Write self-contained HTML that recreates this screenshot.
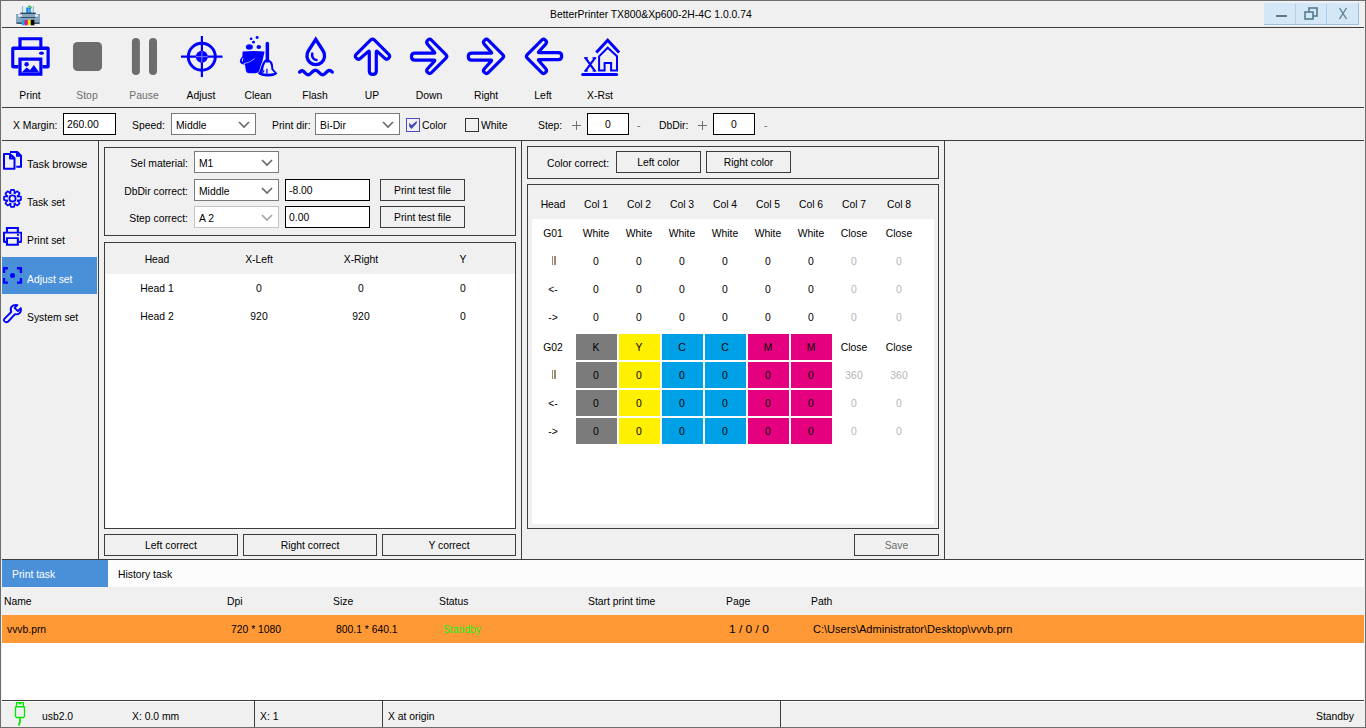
<!DOCTYPE html>
<html><head><meta charset="utf-8">
<style>
*{box-sizing:border-box;margin:0;padding:0}
html,body{width:1366px;height:728px;overflow:hidden;background:#f0f0f0}
body{position:relative;font-family:"Liberation Sans",sans-serif;font-size:11px;color:#000}
.a{position:absolute}
.a svg{display:block}
.t{position:absolute;white-space:nowrap;line-height:14px;font-size:11.5px;transform:scaleX(0.9)}
</style></head><body>
<div class="a" style="left:0px;top:0px;width:1366px;height:1px;background:#6d6d6d"></div>
<div class="a" style="left:0px;top:0px;width:1px;height:728px;background:#6d6d6d"></div>
<div class="a" style="left:1365px;top:0px;width:1px;height:728px;background:#6d6d6d"></div>
<div class="a" style="left:0px;top:727px;width:1366px;height:1px;background:#6d6d6d"></div>
<div class="t" style="left:550px;top:7px;transform-origin:0 0;">BetterPrinter TX800&amp;Xp600-2H-4C 1.0.0.74</div>
<div class="a" style="left:2px;top:27px;width:1362px;height:1px;background:#3c3c3c"></div>
<div class="a" style="left:1264px;top:3px;width:95px;height:22px;background:#d3e7f6"></div>
<div class="a" style="left:1264px;top:24px;width:95px;height:1px;background:#9cc2df"></div>
<div class="a" style="left:1295px;top:4px;width:1px;height:20px;background:#b0d0ea"></div>
<div class="a" style="left:1326px;top:4px;width:1px;height:20px;background:#b0d0ea"></div>
<div class="a" style="left:1358px;top:3px;width:1px;height:21px;background:#9cc2df"></div>
<div class="a" style="left:1276px;top:15px;width:11px;height:2px;background:#577a8f"></div>
<div class="a" style="left:1304px;top:7px"><svg width="15" height="13"><rect x="5" y="1" width="8" height="8" fill="none" stroke="#577a8f" stroke-width="1.6"/><rect x="1" y="5" width="8" height="7" fill="#d3e7f6" stroke="#577a8f" stroke-width="1.6"/></svg></div>
<div class="a" style="left:1338px;top:7px"><svg width="10" height="13"><path d="M1.5 1 L8.5 12 M8.5 1 L1.5 12" stroke="#577a8f" stroke-width="1.3"/></svg></div>
<div class="a" style="left:2px;top:107px;width:1362px;height:1px;background:#3c3c3c"></div>
<div class="t" style="left:0.0px;top:88px;width:60px;text-align:center;transform-origin:50% 0;">Print</div>
<div class="t" style="left:57.0px;top:88px;width:60px;text-align:center;transform-origin:50% 0;color:#6d6d6d">Stop</div>
<div class="t" style="left:114.0px;top:88px;width:60px;text-align:center;transform-origin:50% 0;color:#6d6d6d">Pause</div>
<div class="t" style="left:171.0px;top:88px;width:60px;text-align:center;transform-origin:50% 0;">Adjust</div>
<div class="t" style="left:228.0px;top:88px;width:60px;text-align:center;transform-origin:50% 0;">Clean</div>
<div class="t" style="left:285.0px;top:88px;width:60px;text-align:center;transform-origin:50% 0;">Flash</div>
<div class="t" style="left:342.0px;top:88px;width:60px;text-align:center;transform-origin:50% 0;">UP</div>
<div class="t" style="left:399.0px;top:88px;width:60px;text-align:center;transform-origin:50% 0;">Down</div>
<div class="t" style="left:456.0px;top:88px;width:60px;text-align:center;transform-origin:50% 0;">Right</div>
<div class="t" style="left:513.0px;top:88px;width:60px;text-align:center;transform-origin:50% 0;">Left</div>
<div class="t" style="left:570.0px;top:88px;width:60px;text-align:center;transform-origin:50% 0;">X-Rst</div>
<div class="t" style="left:13px;top:118px;transform-origin:0 0;">X Margin:</div>
<div class="a" style="left:63px;top:113px;width:53px;height:22px;border:1px solid #000;background:#fff"></div>
<div class="t" style="left:67px;top:117px;transform-origin:0 0;">260.00</div>
<div class="t" style="left:132px;top:118px;transform-origin:0 0;">Speed:</div>
<div class="a" style="left:171px;top:113px;width:85px;height:22px;border:1px solid #7a7a7a;background:#fff"></div>
<div class="t" style="left:176px;top:118px;transform-origin:0 0;">Middle</div>
<div class="a" style="left:238px;top:121px"><svg width="12" height="8" viewBox="0 0 12 8"><path d="M1 1 L6 6 L11 1" fill="none" stroke="#6a6a6a" stroke-width="1.7"/></svg></div>
<div class="t" style="left:272px;top:118px;transform-origin:0 0;">Print dir:</div>
<div class="a" style="left:315px;top:113px;width:85px;height:22px;border:1px solid #7a7a7a;background:#fff"></div>
<div class="t" style="left:320px;top:118px;transform-origin:0 0;">Bi-Dir</div>
<div class="a" style="left:382px;top:121px"><svg width="12" height="8" viewBox="0 0 12 8"><path d="M1 1 L6 6 L11 1" fill="none" stroke="#6a6a6a" stroke-width="1.7"/></svg></div>
<div class="a" style="left:406px;top:118px;width:14px;height:14px;border:1px solid #4d4dc2;background:#f0f0f0"></div>
<div class="a" style="left:0;top:0"><svg width="430" height="140"><path d="M409 122.8 L411.6 125.2 L416.9 120.8 L416.6 123.6 L411.4 129 L409.2 126.6 Z" fill="#4343b8"/></svg></div>
<div class="t" style="left:422px;top:118px;transform-origin:0 0;">Color</div>
<div class="a" style="left:465px;top:118px;width:14px;height:14px;border:1px solid #333;background:#f0f0f0"></div>
<div class="t" style="left:481px;top:118px;transform-origin:0 0;">White</div>
<div class="t" style="left:538px;top:118px;transform-origin:0 0;">Step:</div>
<div class="a" style="left:572px;top:125px;width:9px;height:1px;background:#707070"></div>
<div class="a" style="left:576px;top:121px;width:1px;height:9px;background:#707070"></div>
<div class="a" style="left:587px;top:113px;width:42px;height:22px;border:1px solid #000;background:#fff"></div>
<div class="t" style="left:587.0px;top:117px;width:42px;text-align:center;transform-origin:50% 0;">0</div>
<div class="t" style="left:637px;top:118px;transform-origin:0 0;color:#666">-</div>
<div class="t" style="left:659px;top:118px;transform-origin:0 0;">DbDir:</div>
<div class="a" style="left:698px;top:125px;width:9px;height:1px;background:#707070"></div>
<div class="a" style="left:702px;top:121px;width:1px;height:9px;background:#707070"></div>
<div class="a" style="left:713px;top:113px;width:42px;height:22px;border:1px solid #000;background:#fff"></div>
<div class="t" style="left:713.0px;top:117px;width:42px;text-align:center;transform-origin:50% 0;">0</div>
<div class="t" style="left:764px;top:118px;transform-origin:0 0;color:#666">-</div>
<div class="a" style="left:2px;top:140px;width:1362px;height:1px;background:#3c3c3c"></div>
<div class="a" style="left:98px;top:141px;width:1px;height:418px;background:#3c3c3c"></div>
<div class="a" style="left:2px;top:257px;width:95px;height:37px;background:#4a90d9"></div>
<div class="t" style="left:27px;top:157px;transform-origin:0 0;transform:scaleX(0.945)">Task browse</div>
<div class="t" style="left:27px;top:195px;transform-origin:0 0;">Task set</div>
<div class="t" style="left:27px;top:233px;transform-origin:0 0;">Print set</div>
<div class="t" style="left:27px;top:272px;transform-origin:0 0;color:#fff">Adjust set</div>
<div class="t" style="left:27px;top:310px;transform-origin:0 0;">System set</div>
<div class="a" style="left:104px;top:147px;width:412px;height:89px;border:1px solid #3c3c3c;"></div>
<div class="t" style="left:-12px;top:156px;width:200px;text-align:right;transform-origin:100% 0;">Sel material:</div>
<div class="a" style="left:194px;top:151px;width:85px;height:22px;border:1px solid #7a7a7a;background:#fff"></div>
<div class="t" style="left:199px;top:156px;transform-origin:0 0;">M1</div>
<div class="a" style="left:261px;top:159px"><svg width="12" height="8" viewBox="0 0 12 8"><path d="M1 1 L6 6 L11 1" fill="none" stroke="#6a6a6a" stroke-width="1.7"/></svg></div>
<div class="t" style="left:-12px;top:184px;width:200px;text-align:right;transform-origin:100% 0;">DbDir correct:</div>
<div class="a" style="left:194px;top:179px;width:85px;height:22px;border:1px solid #7a7a7a;background:#fff"></div>
<div class="t" style="left:199px;top:184px;transform-origin:0 0;">Middle</div>
<div class="a" style="left:261px;top:187px"><svg width="12" height="8" viewBox="0 0 12 8"><path d="M1 1 L6 6 L11 1" fill="none" stroke="#6a6a6a" stroke-width="1.7"/></svg></div>
<div class="a" style="left:285px;top:179px;width:85px;height:22px;border:1px solid #000;background:#fff"></div>
<div class="t" style="left:289px;top:183px;transform-origin:0 0;">-8.00</div>
<div class="a" style="left:380px;top:179px;width:85px;height:22px;border:1px solid #3c3c3c;background:#f0f0f0;"></div>
<div class="t" style="left:380.0px;top:183px;width:85px;text-align:center;transform-origin:50% 0;">Print test file</div>
<div class="t" style="left:-12px;top:211px;width:200px;text-align:right;transform-origin:100% 0;">Step correct:</div>
<div class="a" style="left:194px;top:206px;width:85px;height:22px;border:1px solid #c4c4c4;background:#fff"></div>
<div class="t" style="left:199px;top:211px;transform-origin:0 0;">A 2</div>
<div class="a" style="left:261px;top:214px"><svg width="12" height="8" viewBox="0 0 12 8"><path d="M1 1 L6 6 L11 1" fill="none" stroke="#a6a6a6" stroke-width="1.7"/></svg></div>
<div class="a" style="left:285px;top:206px;width:85px;height:22px;border:1px solid #000;background:#fff"></div>
<div class="t" style="left:289px;top:210px;transform-origin:0 0;">0.00</div>
<div class="a" style="left:380px;top:206px;width:85px;height:22px;border:1px solid #3c3c3c;background:#f0f0f0;"></div>
<div class="t" style="left:380.0px;top:210px;width:85px;text-align:center;transform-origin:50% 0;">Print test file</div>
<div class="a" style="left:104px;top:242px;width:412px;height:287px;border:1px solid #3c3c3c;"></div>
<div class="a" style="left:106px;top:274px;width:409px;height:254px;background:#fff"></div>
<div class="t" style="left:56.5px;top:252px;width:200px;text-align:center;transform-origin:50% 0;">Head</div>
<div class="t" style="left:158.5px;top:252px;width:200px;text-align:center;transform-origin:50% 0;">X-Left</div>
<div class="t" style="left:260.5px;top:252px;width:200px;text-align:center;transform-origin:50% 0;">X-Right</div>
<div class="t" style="left:362.5px;top:252px;width:200px;text-align:center;transform-origin:50% 0;">Y</div>
<div class="t" style="left:56.5px;top:281px;width:200px;text-align:center;transform-origin:50% 0;">Head 1</div>
<div class="t" style="left:158.5px;top:281px;width:200px;text-align:center;transform-origin:50% 0;">0</div>
<div class="t" style="left:260.5px;top:281px;width:200px;text-align:center;transform-origin:50% 0;">0</div>
<div class="t" style="left:362.5px;top:281px;width:200px;text-align:center;transform-origin:50% 0;">0</div>
<div class="t" style="left:56.5px;top:309px;width:200px;text-align:center;transform-origin:50% 0;">Head 2</div>
<div class="t" style="left:158.5px;top:309px;width:200px;text-align:center;transform-origin:50% 0;">920</div>
<div class="t" style="left:260.5px;top:309px;width:200px;text-align:center;transform-origin:50% 0;">920</div>
<div class="t" style="left:362.5px;top:309px;width:200px;text-align:center;transform-origin:50% 0;">0</div>
<div class="a" style="left:104px;top:534px;width:134px;height:22px;border:1px solid #3c3c3c;background:#f0f0f0;"></div>
<div class="t" style="left:104.0px;top:538px;width:134px;text-align:center;transform-origin:50% 0;">Left correct</div>
<div class="a" style="left:243px;top:534px;width:134px;height:22px;border:1px solid #3c3c3c;background:#f0f0f0;"></div>
<div class="t" style="left:243.0px;top:538px;width:134px;text-align:center;transform-origin:50% 0;">Right correct</div>
<div class="a" style="left:382px;top:534px;width:134px;height:22px;border:1px solid #3c3c3c;background:#f0f0f0;"></div>
<div class="t" style="left:382.0px;top:538px;width:134px;text-align:center;transform-origin:50% 0;">Y correct</div>
<div class="a" style="left:521px;top:141px;width:1px;height:418px;background:#3c3c3c"></div>
<div class="a" style="left:527px;top:146px;width:412px;height:33px;border:1px solid #3c3c3c;"></div>
<div class="t" style="left:547px;top:156px;transform-origin:0 0;">Color correct:</div>
<div class="a" style="left:616px;top:151px;width:85px;height:22px;border:1px solid #3c3c3c;background:#f0f0f0;"></div>
<div class="t" style="left:616.0px;top:155px;width:85px;text-align:center;transform-origin:50% 0;">Left color</div>
<div class="a" style="left:706px;top:151px;width:85px;height:22px;border:1px solid #3c3c3c;background:#f0f0f0;"></div>
<div class="t" style="left:706.0px;top:155px;width:85px;text-align:center;transform-origin:50% 0;">Right color</div>
<div class="a" style="left:527px;top:184px;width:412px;height:345px;border:1px solid #3c3c3c;"></div>
<div class="a" style="left:532px;top:219px;width:402px;height:305px;background:#fff"></div>
<div class="t" style="left:452.5px;top:197px;width:200px;text-align:center;transform-origin:50% 0;">Head</div>
<div class="t" style="left:496.0px;top:197px;width:200px;text-align:center;transform-origin:50% 0;">Col 1</div>
<div class="t" style="left:539.0px;top:197px;width:200px;text-align:center;transform-origin:50% 0;">Col 2</div>
<div class="t" style="left:582.0px;top:197px;width:200px;text-align:center;transform-origin:50% 0;">Col 3</div>
<div class="t" style="left:625.0px;top:197px;width:200px;text-align:center;transform-origin:50% 0;">Col 4</div>
<div class="t" style="left:668.0px;top:197px;width:200px;text-align:center;transform-origin:50% 0;">Col 5</div>
<div class="t" style="left:711.0px;top:197px;width:200px;text-align:center;transform-origin:50% 0;">Col 6</div>
<div class="t" style="left:753.8px;top:197px;width:200px;text-align:center;transform-origin:50% 0;">Col 7</div>
<div class="t" style="left:798.5px;top:197px;width:200px;text-align:center;transform-origin:50% 0;">Col 8</div>
<div class="t" style="left:452.5px;top:226px;width:200px;text-align:center;transform-origin:50% 0;">G01</div>
<div class="t" style="left:496.0px;top:226px;width:200px;text-align:center;transform-origin:50% 0;">White</div>
<div class="t" style="left:539.0px;top:226px;width:200px;text-align:center;transform-origin:50% 0;">White</div>
<div class="t" style="left:582.0px;top:226px;width:200px;text-align:center;transform-origin:50% 0;">White</div>
<div class="t" style="left:625.0px;top:226px;width:200px;text-align:center;transform-origin:50% 0;">White</div>
<div class="t" style="left:668.0px;top:226px;width:200px;text-align:center;transform-origin:50% 0;">White</div>
<div class="t" style="left:711.0px;top:226px;width:200px;text-align:center;transform-origin:50% 0;">White</div>
<div class="t" style="left:753.8px;top:226px;width:200px;text-align:center;transform-origin:50% 0;">Close</div>
<div class="t" style="left:798.5px;top:226px;width:200px;text-align:center;transform-origin:50% 0;">Close</div>
<div class="a" style="left:551.5px;top:256px;width:1.5px;height:9px;background:#9a8a70"></div>
<div class="a" style="left:554px;top:256px;width:1.5px;height:9px;background:#9a8a70"></div>
<div class="t" style="left:496.0px;top:254px;width:200px;text-align:center;transform-origin:50% 0;">0</div>
<div class="t" style="left:539.0px;top:254px;width:200px;text-align:center;transform-origin:50% 0;">0</div>
<div class="t" style="left:582.0px;top:254px;width:200px;text-align:center;transform-origin:50% 0;">0</div>
<div class="t" style="left:625.0px;top:254px;width:200px;text-align:center;transform-origin:50% 0;">0</div>
<div class="t" style="left:668.0px;top:254px;width:200px;text-align:center;transform-origin:50% 0;">0</div>
<div class="t" style="left:711.0px;top:254px;width:200px;text-align:center;transform-origin:50% 0;">0</div>
<div class="t" style="left:753.8px;top:254px;width:200px;text-align:center;transform-origin:50% 0;color:#b4b4b4">0</div>
<div class="t" style="left:798.5px;top:254px;width:200px;text-align:center;transform-origin:50% 0;color:#b4b4b4">0</div>
<div class="t" style="left:452.5px;top:282px;width:200px;text-align:center;transform-origin:50% 0;">&lt;-</div>
<div class="t" style="left:496.0px;top:282px;width:200px;text-align:center;transform-origin:50% 0;">0</div>
<div class="t" style="left:539.0px;top:282px;width:200px;text-align:center;transform-origin:50% 0;">0</div>
<div class="t" style="left:582.0px;top:282px;width:200px;text-align:center;transform-origin:50% 0;">0</div>
<div class="t" style="left:625.0px;top:282px;width:200px;text-align:center;transform-origin:50% 0;">0</div>
<div class="t" style="left:668.0px;top:282px;width:200px;text-align:center;transform-origin:50% 0;">0</div>
<div class="t" style="left:711.0px;top:282px;width:200px;text-align:center;transform-origin:50% 0;">0</div>
<div class="t" style="left:753.8px;top:282px;width:200px;text-align:center;transform-origin:50% 0;color:#b4b4b4">0</div>
<div class="t" style="left:798.5px;top:282px;width:200px;text-align:center;transform-origin:50% 0;color:#b4b4b4">0</div>
<div class="t" style="left:452.5px;top:310px;width:200px;text-align:center;transform-origin:50% 0;">-&gt;</div>
<div class="t" style="left:496.0px;top:310px;width:200px;text-align:center;transform-origin:50% 0;">0</div>
<div class="t" style="left:539.0px;top:310px;width:200px;text-align:center;transform-origin:50% 0;">0</div>
<div class="t" style="left:582.0px;top:310px;width:200px;text-align:center;transform-origin:50% 0;">0</div>
<div class="t" style="left:625.0px;top:310px;width:200px;text-align:center;transform-origin:50% 0;">0</div>
<div class="t" style="left:668.0px;top:310px;width:200px;text-align:center;transform-origin:50% 0;">0</div>
<div class="t" style="left:711.0px;top:310px;width:200px;text-align:center;transform-origin:50% 0;">0</div>
<div class="t" style="left:753.8px;top:310px;width:200px;text-align:center;transform-origin:50% 0;color:#b4b4b4">0</div>
<div class="t" style="left:798.5px;top:310px;width:200px;text-align:center;transform-origin:50% 0;color:#b4b4b4">0</div>
<div class="a" style="left:576px;top:334px;width:41px;height:26px;background:#7b7b7b"></div>
<div class="a" style="left:619px;top:334px;width:41px;height:26px;background:#fff000"></div>
<div class="a" style="left:662px;top:334px;width:41px;height:26px;background:#00a0e6"></div>
<div class="a" style="left:705px;top:334px;width:41px;height:26px;background:#00a0e6"></div>
<div class="a" style="left:748px;top:334px;width:41px;height:26px;background:#e4007f"></div>
<div class="a" style="left:791px;top:334px;width:41px;height:26px;background:#e4007f"></div>
<div class="t" style="left:452.5px;top:340px;width:200px;text-align:center;transform-origin:50% 0;">G02</div>
<div class="t" style="left:496.0px;top:340px;width:200px;text-align:center;transform-origin:50% 0;">K</div>
<div class="t" style="left:539.0px;top:340px;width:200px;text-align:center;transform-origin:50% 0;">Y</div>
<div class="t" style="left:582.0px;top:340px;width:200px;text-align:center;transform-origin:50% 0;">C</div>
<div class="t" style="left:625.0px;top:340px;width:200px;text-align:center;transform-origin:50% 0;">C</div>
<div class="t" style="left:668.0px;top:340px;width:200px;text-align:center;transform-origin:50% 0;">M</div>
<div class="t" style="left:711.0px;top:340px;width:200px;text-align:center;transform-origin:50% 0;">M</div>
<div class="t" style="left:753.8px;top:340px;width:200px;text-align:center;transform-origin:50% 0;">Close</div>
<div class="t" style="left:798.5px;top:340px;width:200px;text-align:center;transform-origin:50% 0;">Close</div>
<div class="a" style="left:576px;top:362px;width:41px;height:26px;background:#7b7b7b"></div>
<div class="a" style="left:619px;top:362px;width:41px;height:26px;background:#fff000"></div>
<div class="a" style="left:662px;top:362px;width:41px;height:26px;background:#00a0e6"></div>
<div class="a" style="left:705px;top:362px;width:41px;height:26px;background:#00a0e6"></div>
<div class="a" style="left:748px;top:362px;width:41px;height:26px;background:#e4007f"></div>
<div class="a" style="left:791px;top:362px;width:41px;height:26px;background:#e4007f"></div>
<div class="a" style="left:551.5px;top:370px;width:1.5px;height:9px;background:#9a8a70"></div>
<div class="a" style="left:554px;top:370px;width:1.5px;height:9px;background:#9a8a70"></div>
<div class="t" style="left:496.0px;top:368px;width:200px;text-align:center;transform-origin:50% 0;">0</div>
<div class="t" style="left:539.0px;top:368px;width:200px;text-align:center;transform-origin:50% 0;">0</div>
<div class="t" style="left:582.0px;top:368px;width:200px;text-align:center;transform-origin:50% 0;">0</div>
<div class="t" style="left:625.0px;top:368px;width:200px;text-align:center;transform-origin:50% 0;">0</div>
<div class="t" style="left:668.0px;top:368px;width:200px;text-align:center;transform-origin:50% 0;">0</div>
<div class="t" style="left:711.0px;top:368px;width:200px;text-align:center;transform-origin:50% 0;">0</div>
<div class="t" style="left:753.8px;top:368px;width:200px;text-align:center;transform-origin:50% 0;color:#b4b4b4">360</div>
<div class="t" style="left:798.5px;top:368px;width:200px;text-align:center;transform-origin:50% 0;color:#b4b4b4">360</div>
<div class="a" style="left:576px;top:390px;width:41px;height:26px;background:#7b7b7b"></div>
<div class="a" style="left:619px;top:390px;width:41px;height:26px;background:#fff000"></div>
<div class="a" style="left:662px;top:390px;width:41px;height:26px;background:#00a0e6"></div>
<div class="a" style="left:705px;top:390px;width:41px;height:26px;background:#00a0e6"></div>
<div class="a" style="left:748px;top:390px;width:41px;height:26px;background:#e4007f"></div>
<div class="a" style="left:791px;top:390px;width:41px;height:26px;background:#e4007f"></div>
<div class="t" style="left:452.5px;top:396px;width:200px;text-align:center;transform-origin:50% 0;">&lt;-</div>
<div class="t" style="left:496.0px;top:396px;width:200px;text-align:center;transform-origin:50% 0;">0</div>
<div class="t" style="left:539.0px;top:396px;width:200px;text-align:center;transform-origin:50% 0;">0</div>
<div class="t" style="left:582.0px;top:396px;width:200px;text-align:center;transform-origin:50% 0;">0</div>
<div class="t" style="left:625.0px;top:396px;width:200px;text-align:center;transform-origin:50% 0;">0</div>
<div class="t" style="left:668.0px;top:396px;width:200px;text-align:center;transform-origin:50% 0;">0</div>
<div class="t" style="left:711.0px;top:396px;width:200px;text-align:center;transform-origin:50% 0;">0</div>
<div class="t" style="left:753.8px;top:396px;width:200px;text-align:center;transform-origin:50% 0;color:#b4b4b4">0</div>
<div class="t" style="left:798.5px;top:396px;width:200px;text-align:center;transform-origin:50% 0;color:#b4b4b4">0</div>
<div class="a" style="left:576px;top:418px;width:41px;height:26px;background:#7b7b7b"></div>
<div class="a" style="left:619px;top:418px;width:41px;height:26px;background:#fff000"></div>
<div class="a" style="left:662px;top:418px;width:41px;height:26px;background:#00a0e6"></div>
<div class="a" style="left:705px;top:418px;width:41px;height:26px;background:#00a0e6"></div>
<div class="a" style="left:748px;top:418px;width:41px;height:26px;background:#e4007f"></div>
<div class="a" style="left:791px;top:418px;width:41px;height:26px;background:#e4007f"></div>
<div class="t" style="left:452.5px;top:424px;width:200px;text-align:center;transform-origin:50% 0;">-&gt;</div>
<div class="t" style="left:496.0px;top:424px;width:200px;text-align:center;transform-origin:50% 0;">0</div>
<div class="t" style="left:539.0px;top:424px;width:200px;text-align:center;transform-origin:50% 0;">0</div>
<div class="t" style="left:582.0px;top:424px;width:200px;text-align:center;transform-origin:50% 0;">0</div>
<div class="t" style="left:625.0px;top:424px;width:200px;text-align:center;transform-origin:50% 0;">0</div>
<div class="t" style="left:668.0px;top:424px;width:200px;text-align:center;transform-origin:50% 0;">0</div>
<div class="t" style="left:711.0px;top:424px;width:200px;text-align:center;transform-origin:50% 0;">0</div>
<div class="t" style="left:753.8px;top:424px;width:200px;text-align:center;transform-origin:50% 0;color:#b4b4b4">0</div>
<div class="t" style="left:798.5px;top:424px;width:200px;text-align:center;transform-origin:50% 0;color:#b4b4b4">0</div>
<div class="a" style="left:854px;top:534px;width:85px;height:22px;border:1px solid #3c3c3c;background:#f0f0f0;"></div>
<div class="t" style="left:854.0px;top:538px;width:85px;text-align:center;transform-origin:50% 0;color:#6d6d6d">Save</div>
<div class="a" style="left:944px;top:141px;width:1px;height:418px;background:#3c3c3c"></div>
<div class="a" style="left:2px;top:559px;width:1362px;height:1px;background:#3c3c3c"></div>
<div class="a" style="left:2px;top:560px;width:1362px;height:27px;background:#fcfcfc"></div>
<div class="a" style="left:2px;top:560px;width:106px;height:27px;background:#4a90d9"></div>
<div class="t" style="left:12px;top:567px;transform-origin:0 0;color:#fff">Print task</div>
<div class="t" style="left:118px;top:567px;transform-origin:0 0;">History task</div>
<div class="a" style="left:2px;top:587px;width:1362px;height:28px;background:#f0f0f0"></div>
<div class="t" style="left:4px;top:594px;transform-origin:0 0;">Name</div>
<div class="t" style="left:227px;top:594px;transform-origin:0 0;">Dpi</div>
<div class="t" style="left:333px;top:594px;transform-origin:0 0;">Size</div>
<div class="t" style="left:439px;top:594px;transform-origin:0 0;">Status</div>
<div class="t" style="left:588px;top:594px;transform-origin:0 0;">Start print time</div>
<div class="t" style="left:726px;top:594px;transform-origin:0 0;">Page</div>
<div class="t" style="left:811px;top:594px;transform-origin:0 0;">Path</div>
<div class="a" style="left:2px;top:615px;width:1362px;height:28px;background:#ff9935"></div>
<div class="t" style="left:7px;top:622px;transform-origin:0 0;">vvvb.prn</div>
<div class="t" style="left:231px;top:622px;transform-origin:0 0;">720 * 1080</div>
<div class="t" style="left:336px;top:622px;transform-origin:0 0;">800.1 * 640.1</div>
<div class="t" style="left:443px;top:622px;transform-origin:0 0;color:#22ee22">Standby</div>
<div class="t" style="left:729px;top:622px;transform-origin:0 0;transform:scaleX(1.04)">1 / 0 / 0</div>
<div class="t" style="left:813px;top:622px;transform-origin:0 0;transform:scaleX(0.96)">C:\Users\Administrator\Desktop\vvvb.prn</div>
<div class="a" style="left:2px;top:643px;width:1362px;height:57px;background:#fff"></div>
<div class="a" style="left:2px;top:700px;width:1362px;height:1px;background:#3c3c3c"></div>
<div class="a" style="left:2px;top:701px;width:1362px;height:1px;background:#ffffff"></div>
<div class="a" style="left:254px;top:701px;width:1px;height:26px;background:#3c3c3c"></div>
<div class="a" style="left:382px;top:701px;width:1px;height:26px;background:#3c3c3c"></div>
<div class="a" style="left:780px;top:701px;width:1px;height:26px;background:#3c3c3c"></div>
<div class="t" style="left:42px;top:709px;transform-origin:0 0;">usb2.0</div>
<div class="t" style="left:132px;top:709px;transform-origin:0 0;">X: 0.0 mm</div>
<div class="t" style="left:260px;top:709px;transform-origin:0 0;">X: 1</div>
<div class="t" style="left:388px;top:709px;transform-origin:0 0;">X at origin</div>
<div class="t" style="left:1154px;top:709px;width:200px;text-align:right;transform-origin:100% 0;">Standby</div>
<svg class="a" style="left:0;top:0" width="1366" height="728" viewBox="0 0 1366 728"><path fill="#0000ff" fill-rule="evenodd" d="M18.4 37.2H42.4V47H18.4Z M21.6 40.3H39.3V47H21.6Z"/><path fill="#0000ff" fill-rule="evenodd" d="M13.2 46.6H47.7Q49.7 46.6 49.7 48.6V66.4Q49.7 68.4 47.7 68.4H13.2Q11.2 68.4 11.2 66.4V48.6Q11.2 46.6 13.2 46.6Z M14.3 50.1H46.5V65H14.3Z"/><rect x="18.4" y="57.4" width="24" height="18.3" fill="#f0f0f0"/><path fill="#0000ff" fill-rule="evenodd" d="M18.4 57.4H42.4V75.7H18.4Z M21.6 60.8H39.3V72.5H21.6Z"/><ellipse cx="41.5" cy="53.2" rx="2.5" ry="1.6" fill="#0000ff"/><circle cx="26.6" cy="64.2" r="2.2" fill="#0000ff"/><path fill="#0000ff" d="M21.6 72.6 L26.6 67.6 L30.1 70 L33.9 65 L39.3 72.6Z"/><rect x="73" y="42" width="29" height="29" rx="4.5" fill="#6d6d6d"/><rect x="131.9" y="38" width="8" height="37" rx="4" fill="#6d6d6d"/><rect x="149" y="38" width="8" height="37" rx="4" fill="#6d6d6d"/><circle cx="201.8" cy="56.7" r="13.5" fill="none" stroke="#0000ff" stroke-width="2.9"/><path d="M181 56.7H222.5 M201.9 36V77" stroke="#0000ff" stroke-width="2.2"/><circle cx="201.8" cy="56.7" r="6" fill="#0000ff"/><path d="M196 56.7H207.6 M201.9 51V62.4" stroke="#9090ff" stroke-width="0.9"/><path fill="#0000ff" d="M242.6 51.6 Q253.5 50.6 264.6 51.6 L260.8 68.6 Q259.8 73.2 255.5 73.2 L249.5 73.2 Q246.2 73.2 245.8 70 L244.9 64.3 Q241.5 64.8 240 62.2 Q239.2 59.8 242.4 56.2 Z"/><path d="M243.4 63.9 Q250 62.5 254.8 58.6" stroke="#c8c8ff" stroke-width="0.8" fill="none"/><path d="M243.2 58 Q241.7 60.2 242.6 61.5" stroke="#d8d8ff" stroke-width="1" fill="none"/><path fill="#f0f0f0" stroke="#f0f0f0" stroke-width="1.2" d="M265.6 43.6 Q265.6 41.8 267.35 41.8 Q269.1 41.8 269.1 43.6 V59.5 L272.2 62.3 Q273.3 65 273.3 69 L277.4 73.6 Q275 76.5 268 76.5 Q261 76.5 257.8 73.5 Q260.2 71.2 260.3 69.5 Q261.3 63.8 264.5 60 L265.6 59.5 Z"/><path fill="#0000ff" d="M265.6 43.6 Q265.6 41.8 267.35 41.8 Q269.1 41.8 269.1 43.6 V59.5 L272.2 62.3 Q273.3 65 273.3 69 L277.4 73.6 Q275 76.5 268 76.5 Q261 76.5 257.8 73.5 Q260.2 71.2 260.3 69.5 Q261.3 63.8 264.5 60 L265.6 59.5 Z"/><path fill="#f0f0f0" d="M265.4 62.4 H269.9 Q271.6 66 271.4 69.6 L274.6 73 Q268 74.4 261.6 73.1 Q263 71 263.2 69.2 Q263.6 65.4 265.4 62.4 Z"/><path d="M266.9 68.8 V73.8 M264.2 70.4 L262.4 73" stroke="#0000ff" stroke-width="1.3"/><ellipse cx="249.4" cy="47" rx="3.5" ry="2.7" fill="#0000ff"/><ellipse cx="258.8" cy="47" rx="2.3" ry="2.0" fill="#0000ff"/><ellipse cx="253.5" cy="42.2" rx="1.5" ry="1.4" fill="#0000ff"/><ellipse cx="251.1" cy="38.7" rx="1.4" ry="1.2" fill="#0000ff"/><ellipse cx="257.1" cy="37.5" rx="1.5" ry="1.4" fill="#0000ff"/><path d="M315.75 39.3 L308.29 51 A8.85 8.85 0 1 0 323.21 51 Z" fill="none" stroke="#0000ff" stroke-width="3.3" stroke-linejoin="miter" stroke-miterlimit="10"/><path d="M312.3 53.6 A4.9 4.9 0 0 0 316.6 60" fill="none" stroke="#0000ff" stroke-width="2.5" stroke-linecap="round"/><path d="M299.6 72 C301 70.6 302.2 70.3 303.4 71.2 L305.9 73.6 C307.4 75.1 309 75.1 310.5 73.6 L313 71.3 C314.5 70 316.3 70 317.8 71.3 L320.3 73.6 C321.8 75.1 323.5 75.1 325 73.6 L327.4 71.3 C328.9 70 330.7 70.2 332.3 72" fill="none" stroke="#0000ff" stroke-width="3.3" stroke-linecap="round" stroke-linejoin="round"/><path d="M374.27 39.96 Q372.50 38.20 370.73 39.96 L356.17 54.44 Q354.40 56.20 356.17 57.97 L356.53 58.33 Q358.30 60.10 360.19 58.47 L368.39 51.38 Q369.30 50.60 369.30 51.80 L369.30 71.00 Q369.30 74.40 372.70 74.40 L372.90 74.40 Q376.30 74.40 376.30 71.00 L376.30 51.80 Q376.30 50.60 377.19 51.41 L384.85 58.41 Q386.70 60.10 388.47 58.33 L388.83 57.97 Q390.60 56.20 388.83 54.44 Z" fill="none" stroke="#0000ff" stroke-width="3.2" stroke-linejoin="round"/><path d="M445.94 58.17 Q447.70 56.40 445.94 54.63 L431.46 40.07 Q429.70 38.30 427.93 40.07 L427.57 40.43 Q425.80 42.20 427.43 44.09 L434.52 52.29 Q435.30 53.20 434.10 53.20 L414.90 53.20 Q411.50 53.20 411.50 56.60 L411.50 56.80 Q411.50 60.20 414.90 60.20 L434.10 60.20 Q435.30 60.20 434.49 61.09 L427.49 68.75 Q425.80 70.60 427.57 72.37 L427.93 72.73 Q429.70 74.50 431.46 72.73 Z" fill="none" stroke="#0000ff" stroke-width="3.2" stroke-linejoin="round"/><path d="M502.74 58.17 Q504.50 56.40 502.74 54.63 L488.26 40.07 Q486.50 38.30 484.73 40.07 L484.37 40.43 Q482.60 42.20 484.23 44.09 L491.32 52.29 Q492.10 53.20 490.90 53.20 L471.70 53.20 Q468.30 53.20 468.30 56.60 L468.30 56.80 Q468.30 60.20 471.70 60.20 L490.90 60.20 Q492.10 60.20 491.29 61.09 L484.29 68.75 Q482.60 70.60 484.37 72.37 L484.73 72.73 Q486.50 74.50 488.26 72.73 Z" fill="none" stroke="#0000ff" stroke-width="3.2" stroke-linejoin="round"/><path d="M527.26 54.63 Q525.50 56.40 527.26 58.17 L541.74 72.73 Q543.50 74.50 545.27 72.73 L545.63 72.37 Q547.40 70.60 545.77 68.71 L538.68 60.51 Q537.90 59.60 539.10 59.60 L558.30 59.60 Q561.70 59.60 561.70 56.20 L561.70 56.00 Q561.70 52.60 558.30 52.60 L539.10 52.60 Q537.90 52.60 538.71 51.71 L545.71 44.05 Q547.40 42.20 545.63 40.43 L545.27 40.07 Q543.50 38.30 541.74 40.07 Z" fill="none" stroke="#0000ff" stroke-width="3.2" stroke-linejoin="round"/><path d="M585.2 57.6 L595.2 71.3 M595.2 57.6 L585.2 71.3" stroke="#0000ff" stroke-width="2.2"/><path d="M584 57.9 H588 M592.4 57.9 H596.3 M584 71 H588 M592.4 71 H596.3" stroke="#0000ff" stroke-width="1.2"/><path d="M599.1 70.5 V56.3 L607.7 47.7 L617 56.3 V70.5 H611.1 V63 H604.6 V70.5 Z" fill="none" stroke="#0000ff" stroke-width="2"/><path d="M596.3 52.4 L607.7 40.2 L619.1 52.4" fill="none" stroke="#0000ff" stroke-width="3" stroke-linejoin="miter"/><rect x="581.2" y="72.9" width="36.9" height="3" rx="1.5" fill="#0000ff"/><path d="M10 152 H17.3 L21 155.7 V166.8 H16.3 M17 152 V155.7 H21" fill="none" stroke="#0000ff" stroke-width="2"/><path d="M4 154 H10.3 L14.5 158.3 V168.8 H4 Z M10 154 V158.4 H14.5" fill="none" stroke="#0000ff" stroke-width="2" stroke-linejoin="round"/><rect x="10.9" y="153.2" width="2" height="1" fill="#f0f0f0"/><path d="M9.91 193.32 L11.01 189.93 L13.99 189.93 L15.09 193.32 L14.26 192.98 L17.43 191.36 L19.54 193.47 L17.92 196.64 L17.58 195.81 L20.97 196.91 L20.97 199.89 L17.58 200.99 L17.92 200.16 L19.54 203.33 L17.43 205.44 L14.26 203.82 L15.09 203.48 L13.99 206.87 L11.01 206.87 L9.91 203.48 L10.74 203.82 L7.57 205.44 L5.46 203.33 L7.08 200.16 L7.42 200.99 L4.03 199.89 L4.03 196.91 L7.42 195.81 L7.08 196.64 L5.46 193.47 L7.57 191.36 L10.74 192.98 Z" fill="none" stroke="#0000ff" stroke-width="1.7" stroke-linejoin="round"/><circle cx="12.5" cy="198.4" r="3.1" fill="none" stroke="#0000ff" stroke-width="1.8"/><path fill="#0000ff" fill-rule="evenodd" d="M5.9 227H18.9V232.5H5.9Z M8 229H16.8V232.5H8Z"/><path fill="#0000ff" fill-rule="evenodd" d="M3 231.8H22V241.4Q22 242.9 20.5 242.9H4.5Q3 242.9 3 241.4Z M5 233.6H20.4V240.75H5Z"/><rect x="5.9" y="237.2" width="13" height="8.55" fill="#f0f0f0"/><path fill="#0000ff" fill-rule="evenodd" d="M5.9 237.2H18.9V245.75H5.9Z M8 239.1H16.8V243.7H8Z"/><rect x="17" y="234" width="1.9" height="1.8" fill="#0000ff"/><path d="M4.1 272.9 V268.3 H7.9 M17 268.3 H20.9 V272.9 M4.1 278 V282.6 H7.9 M17 282.6 H20.9 V278" fill="none" stroke="#0000ff" stroke-width="2.4"/><circle cx="12.5" cy="275.4" r="2.5" fill="#0000ff"/><path d="M4.1 319.2 L11.2 312 Q9.9 309 11.6 306.6 Q13.4 304.7 17.4 305.1 L14.6 307.9 L17.9 311.2 L20.8 308.2 Q21.4 311.5 19.6 313.1 Q17.6 314.9 15 314.2 L8.2 321.5 Q6.2 322.9 4.5 321.4 Q3.3 320.2 4.1 319.2 Z" fill="none" stroke="#0000ff" stroke-width="1.9" stroke-linejoin="round"/><path d="M16.5 702.7 H23.4 V706.5 H16.5 Z M19.2 702.9 H20.8 V703.6 H19.2Z" fill="none" stroke="#00e600" stroke-width="1.2"/><path d="M15.5 706.8 H24.5 V716.5 L23.5 717.5 H16.5 L15.5 716.5 Z" fill="none" stroke="#00e600" stroke-width="1.3"/><path d="M20 718 V721.8 L18.7 725.6" fill="none" stroke="#00e600" stroke-width="1.7"/><rect x="21.9" y="6" width="11.9" height="7" fill="#dcecf6"/><rect x="21.9" y="6" width="1" height="7" fill="#8fb6cc"/><rect x="32.8" y="6" width="1" height="7" fill="#8fb6cc"/><path d="M26.2 7.5 H29.5 Q31 7.5 31 9.2 Q31 10.2 29.8 10.4 Q31.4 10.7 31.4 12 Q31.4 13 30 13 H26.2 Z" fill="#1b8ae0"/><path d="M28.2 9.8 H29.4 M28.2 11.8 H29.6" stroke="#dcecf6" stroke-width="0.8"/><path d="M28.2 6.5 Q30.5 5.6 31.4 8.2" stroke="#3ab52a" stroke-width="1.3" fill="none"/><rect x="20.3" y="12.6" width="15.5" height="2.3" fill="#2b4b66"/><path d="M16 14 H40 V22.5 Q40 24 38.5 24 H17.5 Q16 24 16 22.5 Z" fill="#86a7bd"/><rect x="18" y="14.6" width="4" height="2" fill="#e6f0f6"/><rect x="35" y="14.6" width="3" height="2" fill="#e6f0f6"/><rect x="20.5" y="17.1" width="15" height="0.9" fill="#2a3f66"/><rect x="16.6" y="22.5" width="22.8" height="1.4" fill="#2b4b66"/><rect x="21.8" y="19.8" width="2.8" height="5.5" fill="#1ea8ea"/><rect x="24.6" y="19.8" width="3.2" height="5.5" fill="#e4107c"/><rect x="27.8" y="19.8" width="3" height="5.5" fill="#f2e600"/><rect x="30.8" y="19.8" width="3.6" height="5.5" fill="#060606"/></svg>
</body></html>
